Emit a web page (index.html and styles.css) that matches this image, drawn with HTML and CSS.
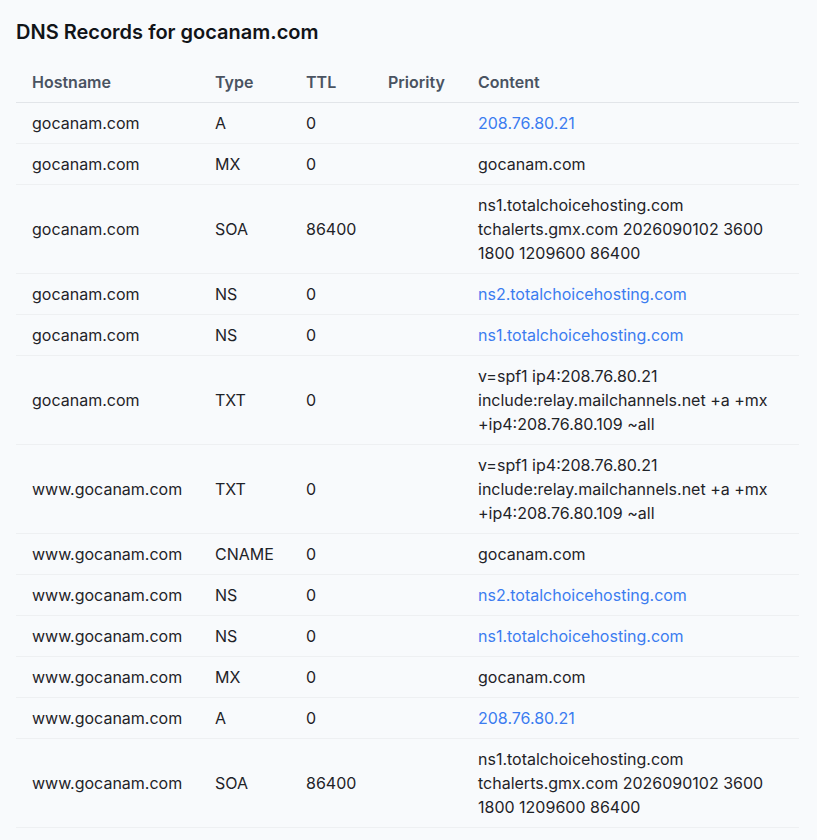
FILE: index.html
```html
<!DOCTYPE html>
<html lang="en">
<head>
<meta charset="utf-8">
<title>DNS Records for gocanam.com</title>
<link rel="stylesheet" href="styles.css">
</head>
<body>
<main class="page">
  <h2 class="title">DNS Records for gocanam.com</h2>
  <table class="dns">
    <colgroup>
      <col class="c-host"><col class="c-type"><col class="c-ttl"><col class="c-prio"><col class="c-content">
    </colgroup>
    <thead>
      <tr><th>Hostname</th><th>Type</th><th>TTL</th><th>Priority</th><th>Content</th></tr>
    </thead>
    <tbody>
      <tr><td>gocanam.com</td><td>A</td><td>0</td><td></td><td><a href="#">208.76.80.21</a></td></tr>
      <tr><td>gocanam.com</td><td>MX</td><td>0</td><td></td><td>gocanam.com</td></tr>
      <tr><td>gocanam.com</td><td>SOA</td><td>86400</td><td></td><td>ns1.totalchoicehosting.com tchalerts.gmx.com 2026090102 3600 1800 1209600 86400</td></tr>
      <tr><td>gocanam.com</td><td>NS</td><td>0</td><td></td><td><a href="#">ns2.totalchoicehosting.com</a></td></tr>
      <tr><td>gocanam.com</td><td>NS</td><td>0</td><td></td><td><a href="#">ns1.totalchoicehosting.com</a></td></tr>
      <tr><td>gocanam.com</td><td>TXT</td><td>0</td><td></td><td>v=spf1 ip4:208.76.80.21 include:relay.mailchannels.net +a +mx +ip4:208.76.80.109 ~all</td></tr>
      <tr><td>www.gocanam.com</td><td>TXT</td><td>0</td><td></td><td>v=spf1 ip4:208.76.80.21 include:relay.mailchannels.net +a +mx +ip4:208.76.80.109 ~all</td></tr>
      <tr><td>www.gocanam.com</td><td>CNAME</td><td>0</td><td></td><td>gocanam.com</td></tr>
      <tr><td>www.gocanam.com</td><td>NS</td><td>0</td><td></td><td><a href="#">ns2.totalchoicehosting.com</a></td></tr>
      <tr><td>www.gocanam.com</td><td>NS</td><td>0</td><td></td><td><a href="#">ns1.totalchoicehosting.com</a></td></tr>
      <tr><td>www.gocanam.com</td><td>MX</td><td>0</td><td></td><td>gocanam.com</td></tr>
      <tr><td>www.gocanam.com</td><td>A</td><td>0</td><td></td><td><a href="#">208.76.80.21</a></td></tr>
      <tr><td>www.gocanam.com</td><td>SOA</td><td>86400</td><td></td><td>ns1.totalchoicehosting.com tchalerts.gmx.com 2026090102 3600 1800 1209600 86400</td></tr>
    </tbody>
  </table>
</main>
</body>
</html>
```
FILE: styles.css
```css
html, body {
  margin: 0;
  padding: 0;
  background: #f8fafc;
}
body {
  font-family: Inter, "Noto Sans", sans-serif;
  color: #1f2328;
  font-size: 16px;
  line-height: 24px;
}
.page {
  padding: 18px 18px 16px 16px;
}
.title {
  margin: 0 0 16px 0;
  font-size: 20px;
  line-height: 28px;
  font-weight: 600;
  color: #111418;
}
.dns {
  width: 783px;
  border-collapse: collapse;
  table-layout: fixed;
}
.c-host { width: 183px; }
.c-type { width: 91px; }
.c-ttl { width: 82px; }
.c-prio { width: 90px; }
.c-content { width: 337px; }
.dns th {
  text-align: left;
  font-weight: 600;
  color: #4a5361;
  padding: 8px 16px;
  border-bottom: 1px solid #e2e5e9;
}
.dns td {
  padding: 8px 16px;
  border-bottom: 1px solid #eef0f2;
  vertical-align: middle;
}
.dns a {
  color: #3b7cf0;
  text-decoration: none;
}
```
